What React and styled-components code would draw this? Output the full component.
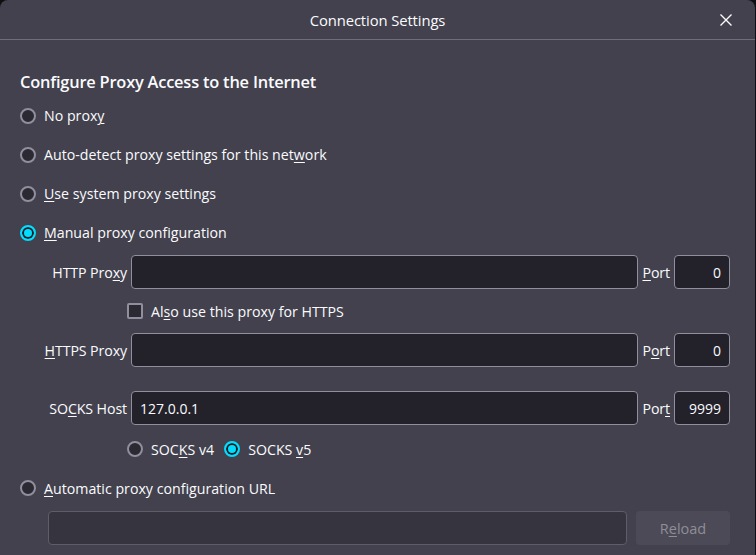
import React, { useState } from 'react'
import styled, { createGlobalStyle } from 'styled-components';

const GlobalStyle = createGlobalStyle`
  html, body {
    margin: 0;
    padding: 0;
    background: #0f0f12;
  }
  body {
    font-family: "Open Sans", "Noto Sans", sans-serif;
    color: #fbfbfe;
  }
`

const Dialog = styled.div`
  width: 755px;
  height: 555px;
  background: #42414d;
  border-radius: 8px 8px 0 0;
  overflow: hidden;
  display: flex;
  flex-direction: column;
  font-size: 14.2px;
`

const TitleBar = styled.div`
  height: 39px;
  border-bottom: 1px solid #6e6d79;
  display: flex;
  align-items: center;
  justify-content: center;
  position: relative;
  font-size: 14.8px;
  letter-spacing: -0.1px;
`

const CloseButton = styled.button`
  position: absolute;
  right: 20px;
  top: 11px;
  width: 18px;
  height: 18px;
  padding: 0;
  border: none;
  background: transparent;
  display: flex;
  align-items: center;
  justify-content: center;
  cursor: pointer;
`

const Content = styled.div`
  padding: 28px 25px 0 20px;
  display: flex;
  flex-direction: column;
`

const Heading = styled.h2`
  margin: 0;
  height: 28px;
  line-height: 28px;
  font-size: 16.4px;
  font-weight: 600;
  letter-spacing: -0.2px;
`

const OptionRow = styled.label`
  height: ${p => p.h || 39}px;
  display: flex;
  align-items: center;
  gap: 8px;
  cursor: default;
`

const Text = styled.span`
  white-space: nowrap;
  margin-right: ${p => p.mr || 0}px;
`

const Radio = styled.span`
  width: 16px;
  height: 16px;
  box-sizing: border-box;
  border-radius: 50%;
  flex-shrink: 0;
  border: 2px solid ${p => p.checked ? '#00ddff' : '#8f8f9d'};
  background: ${p => p.checked ? '#00ddff' : '#2b2a33'};
  box-shadow: ${p => p.checked ? 'inset 0 0 0 2px #1c1b22' : 'none'};
`

const Checkbox = styled.span`
  width: 16px;
  height: 16px;
  box-sizing: border-box;
  border-radius: 2px;
  flex-shrink: 0;
  border: 2px solid #8f8f9d;
  background: #2b2a33;
`

const Key = styled.span`
  text-decoration: underline;
  text-underline-offset: 2px;
  text-decoration-thickness: 1px;
`

const ProxyGrid = styled.div`
  margin-top: 3px;
  margin-left: 24px;
  display: grid;
  grid-template-columns: 83px 1fr auto 56px;
  column-gap: 4px;
  align-items: center;
`

const FieldLabel = styled.span`
  justify-self: end;
  white-space: nowrap;
  letter-spacing: -0.1px;
`

const TextInput = styled.div`
  height: 34px;
  box-sizing: border-box;
  border: 1px solid ${p => p.disabled ? '#5f5e68' : '#8f8f9d'};
  border-radius: 4px;
  background: ${p => p.disabled ? '#36353f' : '#23222b'};
  display: flex;
  align-items: center;
  justify-content: ${p => p.right ? 'flex-end' : 'flex-start'};
  padding: 0 8px;
  font-size: 14px;
`

const SubRow = styled.div`
  grid-column: 2 / 5;
  height: ${p => p.h}px;
  display: flex;
  align-items: center;
  margin-left: -4px;
  gap: 8px;
`

const Spacer = styled.div`
  grid-column: 1 / 5;
  height: ${p => p.h}px;
`

const UrlRow = styled.div`
  margin-top: 8px;
  padding-left: 28px;
  display: grid;
  grid-template-columns: 1fr 94px;
  column-gap: 9px;
`

const ReloadButton = styled.button`
  height: 34px;
  border: none;
  border-radius: 4px;
  background: #4b4a56;
  color: #8f8e97;
  font-family: inherit;
  font-size: 14.5px;
  padding: 0;
`

function CloseIcon() {
  return (
    <svg width="14" height="14" viewBox="0 0 14 14">
      <path d="M1.5 1.5 L12.5 12.5 M12.5 1.5 L1.5 12.5" stroke="#fbfbfe" strokeWidth="1.4" fill="none" />
    </svg>
  )
}

export default function App() {
  const [mode] = useState('manual');
  const [socks] = useState('v5');
  return (
    <>
      <GlobalStyle />
      <Dialog>
        <TitleBar>
          Connection Settings
          <CloseButton aria-label="Close"><CloseIcon /></CloseButton>
        </TitleBar>
        <Content>
          <Heading>Configure Proxy Access to the Internet</Heading>
          <OptionRow><Radio checked={mode === 'none'} /><Text>No prox<Key>y</Key></Text></OptionRow>
          <OptionRow><Radio checked={mode === 'auto'} /><Text>Auto-detect proxy settings for this net<Key>w</Key>ork</Text></OptionRow>
          <OptionRow><Radio checked={mode === 'system'} /><Text><Key>U</Key>se system proxy settings</Text></OptionRow>
          <OptionRow><Radio checked={mode === 'manual'} /><Text><Key>M</Key>anual proxy configuration</Text></OptionRow>

          <ProxyGrid>
            <FieldLabel>HTTP Pro<Key>x</Key>y</FieldLabel>
            <TextInput />
            <FieldLabel><Key>P</Key>ort</FieldLabel>
            <TextInput right>0</TextInput>

            <SubRow h={44}><Checkbox /><Text>Al<Key>s</Key>o use this proxy for HTTPS</Text></SubRow>

            <FieldLabel><Key>H</Key>TTPS Proxy</FieldLabel>
            <TextInput />
            <FieldLabel>P<Key>o</Key>rt</FieldLabel>
            <TextInput right>0</TextInput>

            <Spacer h={24} />

            <FieldLabel>SO<Key>C</Key>KS Host</FieldLabel>
            <TextInput>127.0.0.1</TextInput>
            <FieldLabel>Por<Key>t</Key></FieldLabel>
            <TextInput right>9999</TextInput>

            <SubRow h={48}>
              <Radio checked={socks === 'v4'} />
              <Text mr={2}>SOC<Key>K</Key>S v4</Text>
              <Radio checked={socks === 'v5'} />
              <Text>SOCKS <Key>v</Key>5</Text>
            </SubRow>
          </ProxyGrid>

          <OptionRow h={30}><Radio checked={mode === 'url'} /><Text><Key>A</Key>utomatic proxy configuration URL</Text></OptionRow>

          <UrlRow>
            <TextInput disabled />
            <ReloadButton disabled>R<Key>e</Key>load</ReloadButton>
          </UrlRow>
        </Content>
      </Dialog>
    </>
  )
}
